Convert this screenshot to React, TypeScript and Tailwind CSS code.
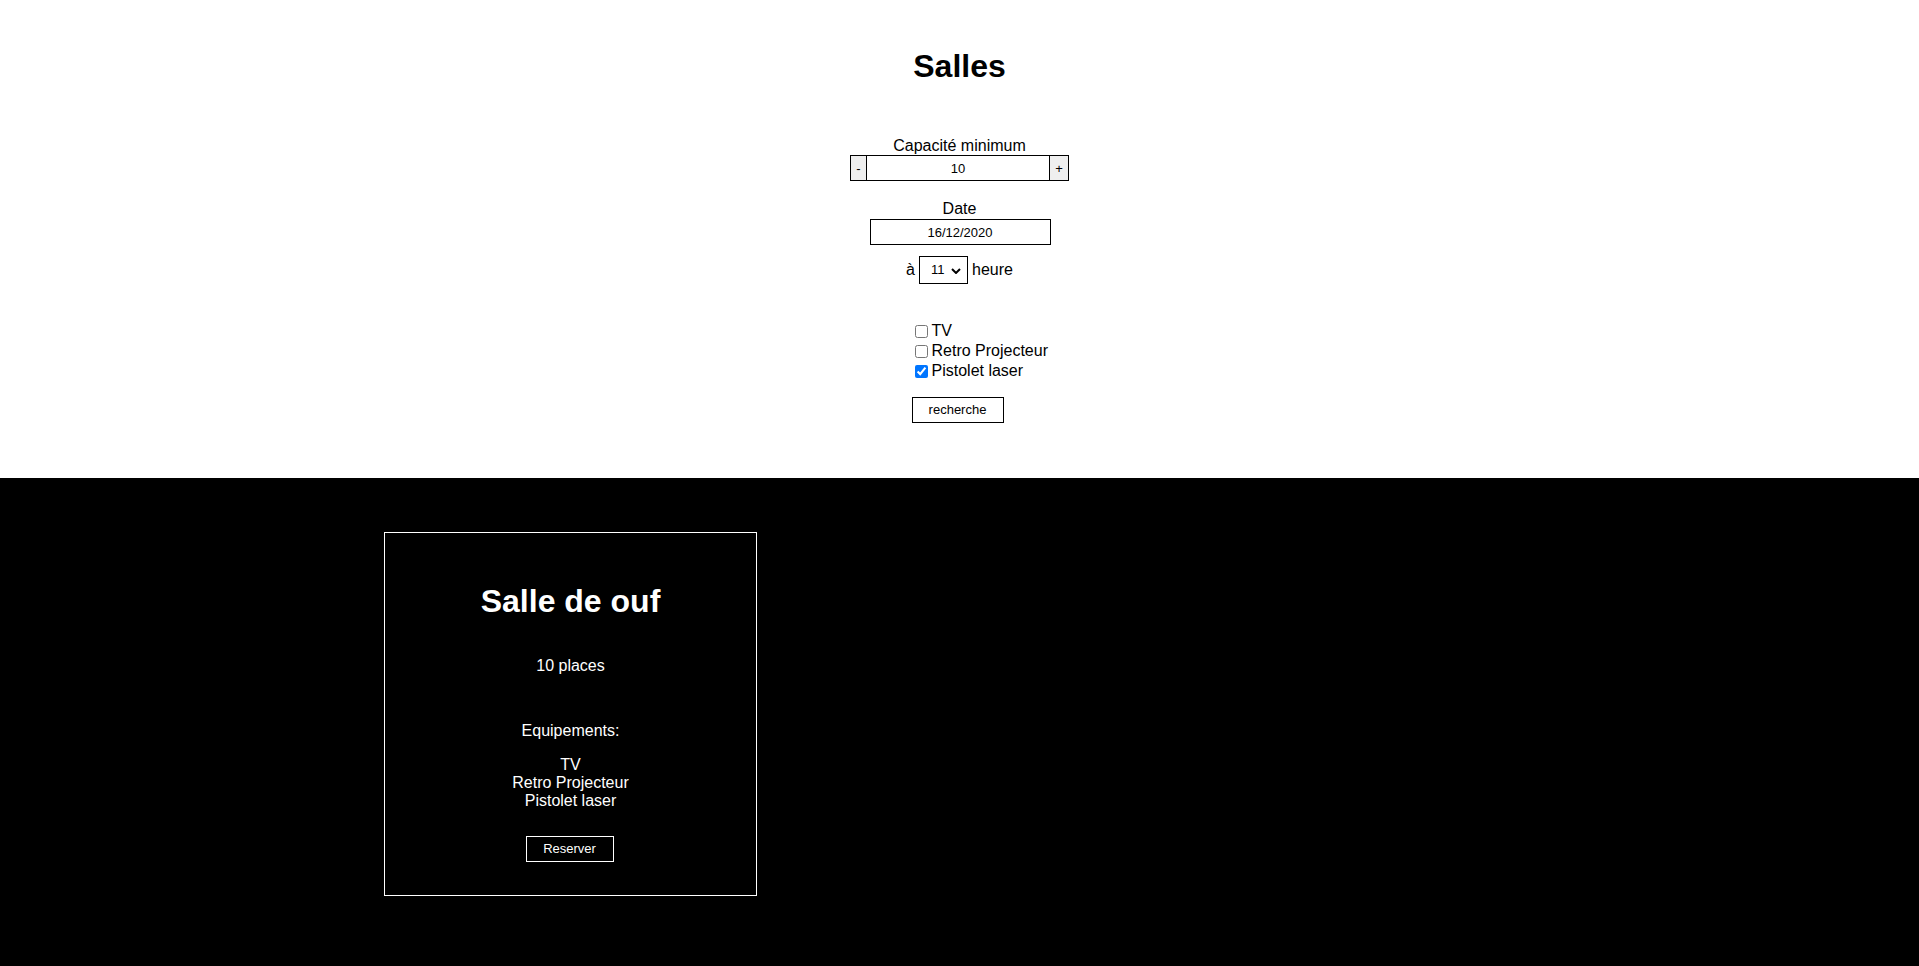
import React from "react";

export default function App() {
  return (
    <div
      className="min-h-screen flex flex-col bg-white text-black"
      style={{ fontFamily: '"Liberation Sans", Arial, sans-serif' }}
    >
      {/* Search section */}
      <section className="flex flex-col items-center pt-[48px] pb-[55px]">
        <h1 className="text-[32px] leading-[37px] font-bold">Salles</h1>

        <label className="mt-[52px] text-[16px] leading-[18px]">Capacité minimum</label>
        <div className="flex h-[26px]">
          <button className="w-[17px] h-[26px] border border-black bg-[#efefef] text-[13px] leading-none flex items-center justify-center">
            -
          </button>
          <input
            type="text"
            defaultValue="10"
            className="w-[182px] h-[26px] border border-black border-l-0 border-r-0 text-center text-[13px] outline-none bg-white"
          />
          <button className="w-[20px] h-[26px] border border-black bg-[#efefef] text-[13px] leading-none flex items-center justify-center">
            +
          </button>
        </div>

        <label className="mt-[19px] text-[16px] leading-[18px]">Date</label>
        <input
          type="text"
          defaultValue="16/12/2020"
          className="mt-[1px] ml-[1px] w-[181px] h-[26px] border border-black text-center text-[13px] outline-none bg-white"
        />

        <div className="mt-[11px] flex items-center gap-[4px] text-[16px] leading-[18px]">
          <span>à</span>
          <div className="relative w-[49px] h-[28px]">
            <select
              defaultValue="11"
              className="appearance-none w-[49px] h-[28px] border border-black bg-white pl-[11px] text-[13px] outline-none"
            >
              {Array.from({ length: 24 }, (_, i) => (
                <option key={i} value={String(i)}>
                  {i}
                </option>
              ))}
            </select>
            <svg
              className="absolute right-[7px] top-[12px] pointer-events-none"
              width="10"
              height="6"
              viewBox="0 0 10 6"
            >
              <path d="M1 1 L5 5 L9 1" fill="none" stroke="#000" strokeWidth="2" />
            </svg>
          </div>
          <span>heure</span>
        </div>

        <div className="mt-[37px] w-[98px] flex flex-col items-start whitespace-nowrap">
          {[
            { label: "TV", checked: false },
            { label: "Retro Projecteur", checked: false },
            { label: "Pistolet laser", checked: true },
          ].map((item) => (
            <label key={item.label} className="h-[20px] flex items-center text-[16px] leading-[18px]">
              <input
                type="checkbox"
                defaultChecked={item.checked}
                className="ml-[4px] mr-[4px] w-[13px] h-[13px] m-0"
              />
              <span>{item.label}</span>
            </label>
          ))}
          <button className="mt-[16px] ml-[1px] w-[92px] h-[26px] border border-black bg-white text-[13px]">
            recherche
          </button>
        </div>
      </section>

      {/* Results section */}
      <section className="flex-1 bg-black text-white pt-[54px] pb-[70px] pl-[384px]">
        <div className="w-[373px] h-[364px] border border-white flex flex-col items-center text-center pt-[50px]">
          <h2 className="text-[32px] leading-[37px] font-bold">Salle de ouf</h2>
          <p className="mt-[37px] text-[16px] leading-[18px]">10 places</p>
          <p className="mt-[47px] text-[16px] leading-[18px]">Equipements:</p>
          <div className="mt-[16px] flex flex-col text-[16px] leading-[18px]">
            <span>TV</span>
            <span>Retro Projecteur</span>
            <span>Pistolet laser</span>
          </div>
          <button className="mt-[26px] mr-[2px] w-[88px] h-[26px] border border-white bg-black text-white text-[13px]">
            Reserver
          </button>
        </div>
      </section>
    </div>
  );
}
